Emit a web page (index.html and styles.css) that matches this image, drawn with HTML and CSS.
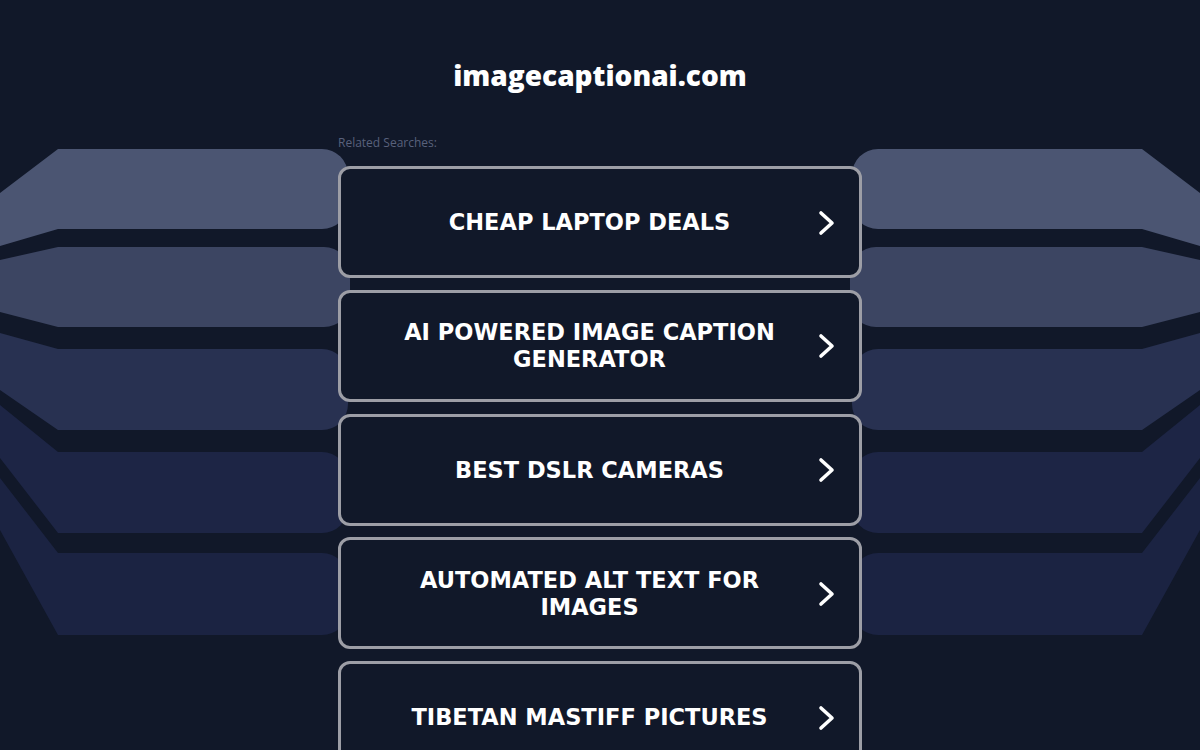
FILE: index.html
```html
<!DOCTYPE html>
<html lang="en">
<head>
<meta charset="utf-8">
<title>imagecaptionai.com</title>
<link rel="stylesheet" href="styles.css">
</head>
<body>
<svg class="backdrop" width="1200" height="750" viewBox="0 0 1200 750" aria-hidden="true">
  <g id="left">
    <path fill="#4b5572" d="M0,193 L58,149 L322,149 A26 26 0 0 1 348,175 L348,203 A26 26 0 0 1 322,229 L58,229 L0,246 Z"/>
    <path fill="#3c4562" d="M0,260 L58,247 L324,247 A26 26 0 0 1 350,273 L350,301 A26 26 0 0 1 324,327 L58,327 L0,312 Z"/>
    <path fill="#283151" d="M0,333 L58,349 L322,349 A26 26 0 0 1 348,375 L348,404 A26 26 0 0 1 322,430 L58,430 L0,390 Z"/>
    <path fill="#1d2545" d="M0,405 L58,452 L322,452 A26 26 0 0 1 348,478 L348,507 A26 26 0 0 1 322,533 L58,533 L0,458 Z"/>
    <path fill="#1b2342" d="M0,478 L58,553 L322,553 A26 26 0 0 1 348,579 L348,609 A26 26 0 0 1 322,635 L58,635 L0,530 Z"/>
  </g>
  <g transform="translate(1200,0) scale(-1,1)">
    <path fill="#4b5572" d="M0,193 L58,149 L322,149 A26 26 0 0 1 348,175 L348,203 A26 26 0 0 1 322,229 L58,229 L0,246 Z"/>
    <path fill="#3c4562" d="M0,260 L58,247 L324,247 A26 26 0 0 1 350,273 L350,301 A26 26 0 0 1 324,327 L58,327 L0,312 Z"/>
    <path fill="#283151" d="M0,333 L58,349 L322,349 A26 26 0 0 1 348,375 L348,404 A26 26 0 0 1 322,430 L58,430 L0,390 Z"/>
    <path fill="#1d2545" d="M0,405 L58,452 L322,452 A26 26 0 0 1 348,478 L348,507 A26 26 0 0 1 322,533 L58,533 L0,458 Z"/>
    <path fill="#1b2342" d="M0,478 L58,553 L322,553 A26 26 0 0 1 348,579 L348,609 A26 26 0 0 1 322,635 L58,635 L0,530 Z"/>
  </g>
</svg>
<main class="page">
  <h1 class="domain">imagecaptionai.com</h1>
  <p class="related">Related Searches:</p>
  <ul class="links">
    <li><a class="card" href="#"><span class="label">CHEAP LAPTOP DEALS</span><svg class="chev" width="20" height="26" viewBox="0 0 20 26"><path d="M4 3 L15 13 L4 23"/></svg></a></li>
    <li><a class="card" href="#"><span class="label">AI POWERED IMAGE CAPTION GENERATOR</span><svg class="chev" width="20" height="26" viewBox="0 0 20 26"><path d="M4 3 L15 13 L4 23"/></svg></a></li>
    <li><a class="card" href="#"><span class="label">BEST DSLR CAMERAS</span><svg class="chev" width="20" height="26" viewBox="0 0 20 26"><path d="M4 3 L15 13 L4 23"/></svg></a></li>
    <li><a class="card" href="#"><span class="label">AUTOMATED ALT TEXT FOR IMAGES</span><svg class="chev" width="20" height="26" viewBox="0 0 20 26"><path d="M4 3 L15 13 L4 23"/></svg></a></li>
    <li><a class="card" href="#"><span class="label">TIBETAN MASTIFF PICTURES</span><svg class="chev" width="20" height="26" viewBox="0 0 20 26"><path d="M4 3 L15 13 L4 23"/></svg></a></li>
  </ul>
</main>
</body>
</html>
```
FILE: styles.css
```css
html, body {
  margin: 0;
  padding: 0;
  background: #111829;
  height: 100%;
  overflow: hidden;
}
body {
  position: relative;
  font-family: "DejaVu Sans", Verdana, sans-serif;
  color: #fff;
}
.backdrop {
  position: absolute;
  left: 0;
  top: 0;
  z-index: 0;
}
.page {
  position: relative;
  z-index: 1;
  width: 524px;
  margin: 0 auto;
}
.domain {
  margin: 57px 0 0;
  font-family: "Open Sans", sans-serif;
  font-weight: 800;
  font-size: 28px;
  line-height: 36px;
  text-align: center;
  color: #fff;
}
.related {
  margin: 42px 0 0;
  font-family: "Open Sans", Arial, sans-serif;
  font-size: 12px;
  line-height: 16px;
  color: #59617c;
}
.links {
  list-style: none;
  margin: 15px 0 0;
  padding: 0;
  display: flex;
  flex-direction: column;
  gap: 11.75px;
}
.card {
  box-sizing: border-box;
  height: 112px;
  display: flex;
  align-items: center;
  padding: 1px 22px 0 21px;
  border: 3px solid #9d9ea6;
  border-radius: 12px;
  background: #111829;
  text-decoration: none;
  color: #fff;
}
.label {
  flex: 1;
  padding: 0 17px;
  text-align: center;
  font-weight: 700;
  font-size: 22.5px;
  line-height: 27px;
  color: #fff;
}
.chev {
  flex: none;
}
.chev path {
  fill: none;
  stroke: #fff;
  stroke-width: 3.6;
  stroke-linecap: round;
  stroke-linejoin: round;
}
```
